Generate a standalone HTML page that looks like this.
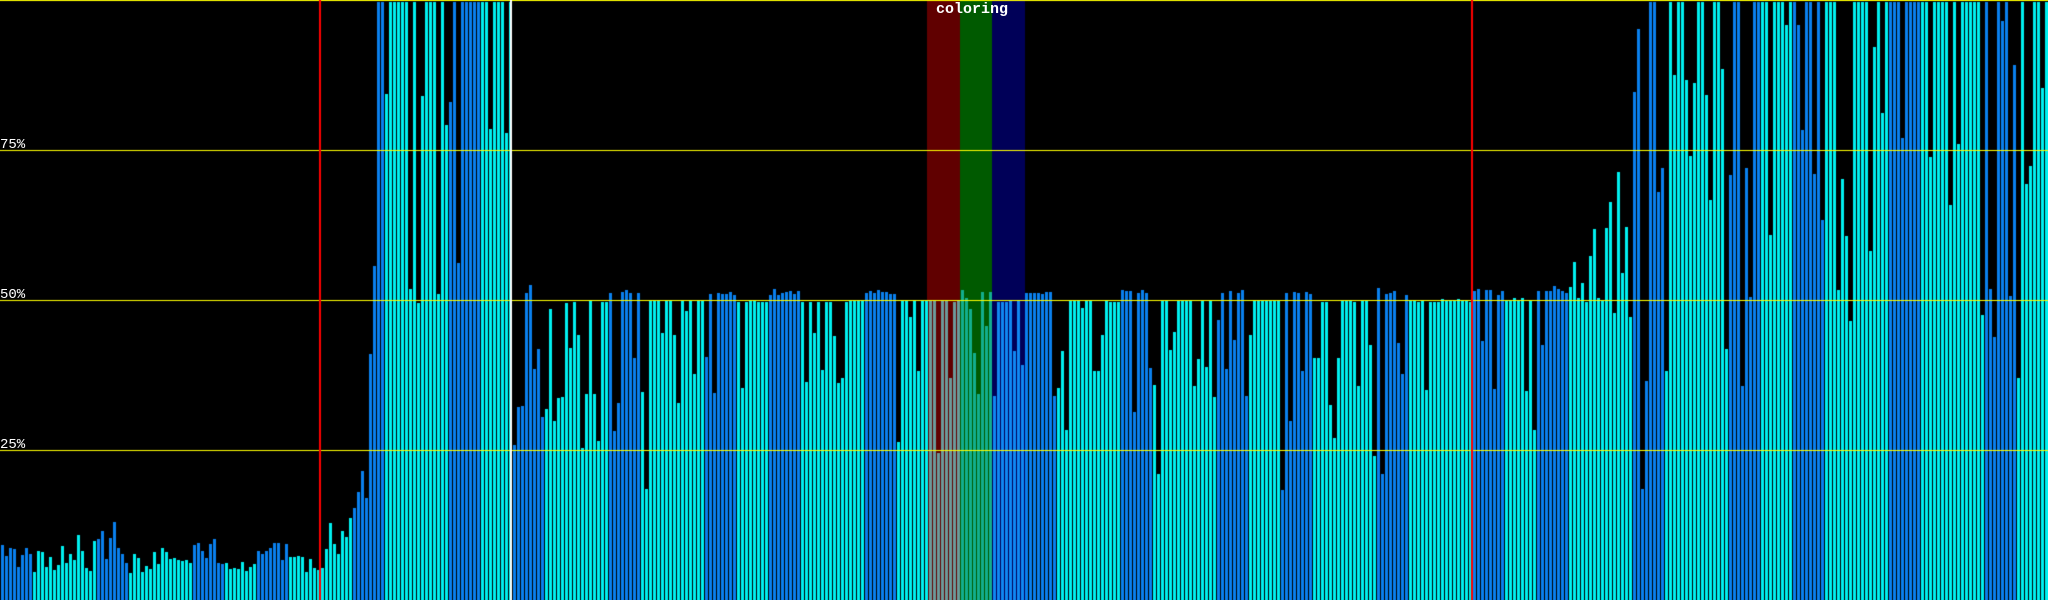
<!DOCTYPE html>
<html><head><meta charset="utf-8"><style>
html,body{margin:0;padding:0;background:#000;width:2048px;height:600px;overflow:hidden}
#c{position:absolute;left:0;top:0}
.l{position:absolute;left:0;color:#fff;font:14px "Liberation Mono",monospace;line-height:14px}
#t{position:absolute;left:936px;top:2px;color:#fff;font:bold 15px "Liberation Mono",monospace;line-height:16px}
</style></head><body>
<canvas id="c" width="2048" height="600"></canvas>
<div class="l" style="top:138px">75%</div>
<div class="l" style="top:288px">50%</div>
<div class="l" style="top:438px">25%</div>
<div id="t">coloring</div>
<script>
var t=new Array(512),col=new Array(512);
function put(start,arr,f){for(var i=0;i<arr.length;i++)t[start+i]=f(arr[i]);}
function cl(a,b,c){for(var i=a;i<=b;i++)col[i]=c;}
var z6=[315,348,324,327,381,345,324,342,396,333,336,381,351,390,375,318,369,342,360,285,333,384,393,303,297,273,357,294,246,324,342,369,399,342,354,396,378,387,336,372,324,336,357,354,360,363,360,369,315,309,333,354,312,297,369,372,369,387,384,387,366,393,381,372,333,342,333,324,309,309,360,312,351,351,348,351,396,357,384,390,384];
put(0,z6,function(v){return 440+v/3});
var z1=[1435,1367,1422,1448,1388,1404,1356,1328,1286,1231,1304,925,695,5,5,245,5,5,5,5,5,755,5,792,250,5,5,5,768,5,327,268,5,687,5,5,5,5,5,5,5,337,5,5];
put(81,z1,function(v){return v/2.616});
t[125]=2;t[126]=133;t[127]=2;
var z3=[585,471,468,129,105,357,297,501,
477,177,513,444,441,159,294,156,255,594,432,150,432,573,156,156,
129,543,459,126,120,129,324,129,
426,717,150,150,150,249,150,150,255,459,150,183,150,372,150,153,
321,132,429,129,132,132,126,135,
156,414,156,153,153,156,156,156,
135,117,135,129,126,123,132,123,
156,396,156,249,156,360,156,156,258,399,384,156,150,150,150,150,
129,123,129,120,126,126,132,132,576];
put(128,z3,function(v){return 250+v/3});
var z2=[787,787,828,787,970,787,787,
787,787,1184,787,787,988,789,787,
758,779,808,923,1030,763,852,763,
1037,789,789,789,787,917,787,954,
766,766,766,766,768,763,763,1037,1014];
put(225,z2,function(v){return v/2.616});
var z4=[303,540,152,152,152,174,152,152,363,363,255,152,156,156,156,
120,123,123,486,129,120,129,354,
405,672,152,152,300,246,152,152,152,152,408,327,152,351,152,441,
210,129,357,123,270,129,120,438,
255,152,152,152,152,152,152,152,
720,129,513,126,129,363,126,132,
324,324,156,156,465,564,324,152,152,152,156,408,152,152,285,618,
114,672,132,129,123,279,372,135,
152,152,156,152,420,156,156,156,147,152,152,152,147,152,152,156];
put(265,z4,function(v){return 250+v/3});
var z5=[760,755,891,758,758,1017,771,760,
787,787,779,787,779,1024,787,1124,
760,902,760,760,747,755,760,766,
750,685,779,740,789,669,598,779,787,596,528,818,449,713,593,828,
240,76,1278,996,5,5,502,439,
970,5,196,5,5,209,408,217,5,5,248,523,5,5,180,912,
457,5,5,1011,439,776,5,5,
5,5,614,5,5,5,65,5,
5,65,340,5,5,455,5,575,
5,5,5,758,468,617,839,5,5,5,5,656,123,5,295,5,
5,5,5,361,5,5,5,5,
5,5,410,5,5,5,5,536,5,376,5,5,5,5,5,823,
5,755,881,5,55,5,774,170,
990,5,481,434,5,5,230,5];
put(368,z5,function(v){return v/2.616});
var B='#0a80ee',C='#00f0f0';
var runs=[[0,7,B],[8,23,C],[24,31,B],[32,47,C],[48,55,B],[56,63,C],[64,71,B],[72,87,C],[88,95,B],[96,111,C],[112,119,B],[120,127,C],
[128,135,B],[136,151,C],[152,159,B],[160,175,C],[176,183,B],[184,191,C],[192,199,B],[200,215,C],[216,223,B],[224,247,C],[248,263,B],[264,279,C],
[280,287,B],[288,303,C],[304,311,B],[312,319,C],[320,327,B],[328,343,C],[344,351,B],[352,367,C],[368,375,B],[376,383,C],[384,391,B],[392,407,C],
[408,415,B],[416,431,C],[432,439,B],[440,447,C],[448,455,B],[456,471,C],[472,479,B],[480,495,C],[496,503,B],[504,511,C]];
runs.forEach(function(r){cl(r[0],r[1],r[2])});
var g=document.getElementById('c').getContext('2d');
g.fillStyle='#000';g.fillRect(0,0,2048,600);
g.fillStyle='#600000';g.fillRect(927,0,33,600);
g.fillStyle='#005a00';g.fillRect(960,0,32,600);
g.fillStyle='#000058';g.fillRect(992,0,33,600);
for(var i=0;i<512;i++){var y=Math.round(t[i]);if(isNaN(y))y=300;if(y<2)y=2;
 var x=4*i+1,c=col[i]||C;
 if(x>=927&&x<960)c='#6c9a9a';else if(x>=960&&x<992)c='#12ae8e';else if(x>=992&&x<1025)c='#1088f2';
 g.fillStyle=c;g.fillRect(x,y,3,600-y);}
g.fillStyle='#ffff00';
[0,150,300,450].forEach(function(y){g.fillRect(0,y,2048,1)});
g.fillStyle='#ff0000';g.fillRect(319,0,2,600);g.fillRect(1471,0,2,600);
g.fillStyle='#ffffff';g.fillRect(510,0,2,600);
</script>
</body></html>
